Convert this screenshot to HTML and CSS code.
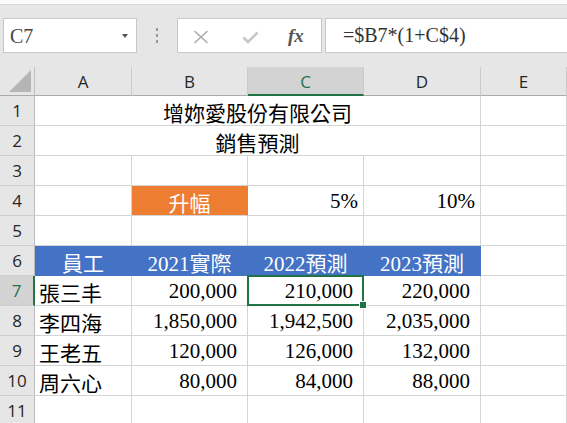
FILE: index.html
```
<!DOCTYPE html>
<html>
<head>
<meta charset="utf-8">
<link rel="stylesheet" href="styles.css">
</head>
<body>
<div class="app">
  <div class="topstrip"></div>
  <div class="toolbar">
    <div class="namebox"><span class="nb-text">C7</span><span class="caret"></span></div>
    <div class="dots"><i></i><i></i><i></i></div>
    <div class="fxbox">
      <svg class="ic-x" width="16" height="14" viewBox="0 0 16 14"><path d="M1.5 1 L14.5 13 M14.5 1 L1.5 13" stroke="#a8a8a8" stroke-width="1.5" fill="none"/></svg>
      <svg class="ic-check" width="17" height="13" viewBox="0 0 17 13"><path d="M1.5 6.5 L6 11 L15.5 1.5" stroke="#c6c6c6" stroke-width="2.6" fill="none"/></svg>
      <span class="fx">fx</span>
    </div>
    <div class="formula">=$B7*(1+C$4)</div>
  </div>
  <div class="sheet">
    <div class="hd corner"><span class="tri"></span></div>
    <div class="hd col">A</div>
    <div class="hd col">B</div>
    <div class="hd col selcol">C</div>
    <div class="hd col">D</div>
    <div class="hd col">E</div>

    <div class="hd row">1</div>
    <div class="c span4 center title">增妳愛股份有限公司</div>
    <div class="c"></div>

    <div class="hd row">2</div>
    <div class="c span4 center title">銷售預測</div>
    <div class="c"></div>

    <div class="hd row">3</div>
    <div class="c"></div><div class="c"></div><div class="c"></div><div class="c"></div><div class="c"></div>

    <div class="hd row">4</div>
    <div class="c"></div>
    <div class="c center orange">升幅</div>
    <div class="c right pct">5%</div>
    <div class="c right pct">10%</div>
    <div class="c"></div>

    <div class="hd row">5</div>
    <div class="c"></div><div class="c"></div><div class="c"></div><div class="c"></div><div class="c"></div>

    <div class="hd row">6</div>
    <div class="c center blue">員工</div>
    <div class="c center blue">2021實際</div>
    <div class="c center blue">2022預測</div>
    <div class="c center blue">2023預測</div>
    <div class="c"></div>

    <div class="hd row selrow">7</div>
    <div class="c left">張三丰</div>
    <div class="c right num">200,000</div>
    <div class="c right num sel">210,000</div>
    <div class="c right num">220,000</div>
    <div class="c"></div>

    <div class="hd row">8</div>
    <div class="c left">李四海</div>
    <div class="c right num">1,850,000</div>
    <div class="c right num">1,942,500</div>
    <div class="c right num">2,035,000</div>
    <div class="c"></div>

    <div class="hd row">9</div>
    <div class="c left">王老五</div>
    <div class="c right num">120,000</div>
    <div class="c right num">126,000</div>
    <div class="c right num">132,000</div>
    <div class="c"></div>

    <div class="hd row">10</div>
    <div class="c left">周六心</div>
    <div class="c right num">80,000</div>
    <div class="c right num">84,000</div>
    <div class="c right num">88,000</div>
    <div class="c"></div>

    <div class="hd row">11</div>
    <div class="c"></div><div class="c"></div><div class="c"></div><div class="c"></div><div class="c"></div>
  </div>
</div>
</body>
</html>
```
FILE: styles.css
```
html, body {
  margin: 0;
  padding: 0;
  background: #ffffff;
  overflow: hidden;
}
.app {
  width: 567px;
  height: 423px;
  overflow: hidden;
}
.topstrip {
  height: 4px;
  background: #fafafa;
  border-bottom: 1px solid #d9d9d9;
}
.toolbar {
  height: 62px;
  background: #e6e6e6;
  display: flex;
  align-items: flex-start;
  padding-top: 13px;
  box-sizing: border-box;
}
.namebox {
  margin-left: 3px;
  width: 134px;
  height: 35px;
  box-sizing: border-box;
  background: #fff;
  border: 1px solid #c8c8c8;
  display: flex;
  align-items: center;
  justify-content: space-between;
  padding-left: 6px;
  padding-right: 8px;
}
.nb-text {
  font-family: "Liberation Serif", serif;
  font-size: 20px;
  color: #444;
  padding-top: 1px;
}
.caret {
  width: 0;
  height: 0;
  border-left: 3.5px solid transparent;
  border-right: 3.5px solid transparent;
  border-top: 4px solid #555;
}
.dots {
  width: 40px;
  height: 35px;
  display: flex;
  flex-direction: column;
  align-items: center;
  justify-content: center;
  gap: 3px;
}
.dots i {
  display: block;
  width: 2px;
  height: 3px;
  background: #9a9a9a;
}
.fxbox {
  width: 145px;
  height: 35px;
  box-sizing: border-box;
  background: #fff;
  border: 1px solid #c8c8c8;
  display: flex;
  align-items: center;
  padding-left: 15px;
}
.ic-x { margin-top: 2px; }
.ic-check { margin-left: 33px; margin-top: 3px; }
.fx {
  margin-left: 29px;
  font-family: "Liberation Serif", serif;
  font-style: italic;
  font-weight: bold;
  font-size: 19px;
  color: #555;
}
.formula {
  margin-left: 3px;
  flex: 1;
  height: 35px;
  box-sizing: border-box;
  background: #fff;
  border: 1px solid #c8c8c8;
  border-right: none;
  display: flex;
  align-items: center;
  padding-left: 17px;
  font-family: "Liberation Serif", serif;
  font-size: 20px;
  color: #333;
}
.sheet {
  display: grid;
  grid-template-columns: 35px 97px 116px 116px 117px 86px;
  grid-template-rows: 29px repeat(11, 30px);
}
.hd {
  background: #e6e6e6;
  box-sizing: border-box;
  font-family: "Open Sans", "Noto Sans", sans-serif;
  color: #262626;
  display: flex;
  align-items: center;
  justify-content: center;
}
.corner {
  border-right: 1px solid #c0c0c0;
  border-bottom: 1px solid #ababab;
  position: relative;
}
.tri {
  position: absolute;
  right: 3px;
  bottom: 3px;
  width: 22px;
  height: 22px;
  background: #b5b5b5;
  clip-path: polygon(100% 0, 100% 100%, 0 100%);
}
.col {
  font-size: 17px;
  border-right: 1px solid #cbcbcb;
  border-bottom: 1px solid #ababab;
  padding-top: 1px;
}
.selcol {
  background: #d3d3d3;
  color: #217346;
  border-bottom: 2px solid #217346;
}
.row {
  font-size: 17px;
  border-right: 1px solid #bcbcbc;
  border-bottom: 1px solid #cfcfcf;
}
.selrow {
  background: #d3d3d3;
  color: #217346;
  border-right: 2px solid #217346;
}
.c {
  box-sizing: border-box;
  border-right: 1px solid #d4d4d4;
  border-bottom: 1px solid #d4d4d4;
  font-family: "Liberation Serif", "Noto Sans CJK TC", serif;
  font-size: 21px;
  color: #000;
  display: flex;
  align-items: center;
  white-space: nowrap;
  padding-top: 2px;
}
.span4 { grid-column: span 4; }
.center { justify-content: center; }
.right { justify-content: flex-end; }
.left { padding-left: 4px; }
.num { padding-right: 10px; }
.pct { padding-right: 5px; }
.title { color: #000; }
.orange {
  background: #ed7d31;
  color: #fff;
  border-right-color: #ed7d31;
}
.blue {
  background: #4472c4;
  color: #fff;
  border-right-color: #4472c4;
  border-bottom-color: #4472c4;
}
.sel {
  position: relative;
}
.sel::after {
  content: "";
  position: absolute;
  left: -1px;
  top: -1px;
  right: -1px;
  bottom: -1px;
  border: 2px solid #217346;
}
.sel::before {
  content: "";
  position: absolute;
  right: -4px;
  bottom: -4px;
  width: 6px;
  height: 6px;
  background: #217346;
  border: 1px solid #fff;
  z-index: 2;
}
```
